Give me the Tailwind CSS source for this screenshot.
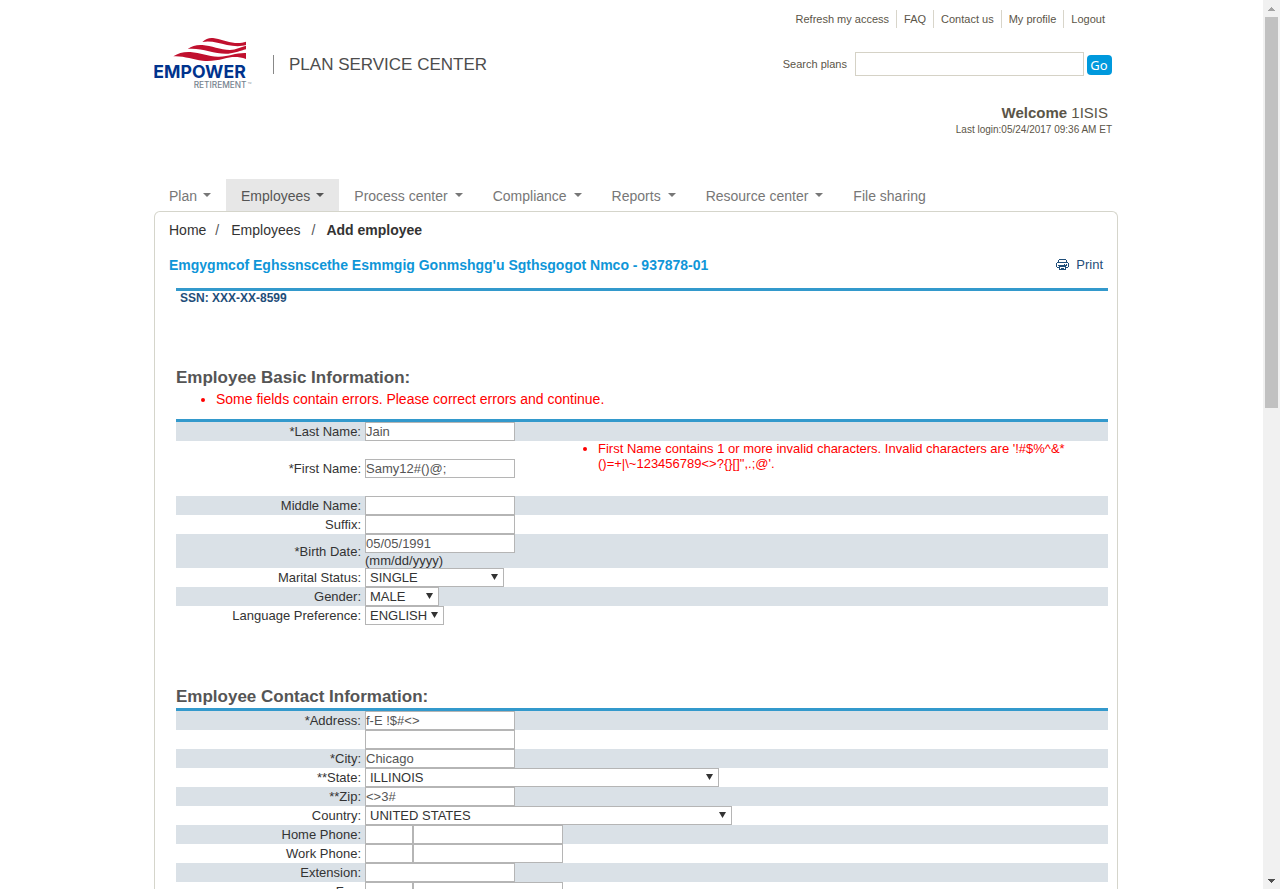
<!DOCTYPE html>
<html lang="en">
<head>
<meta charset="utf-8">
<title>Plan Service Center - Add employee</title>
<script src="https://cdn.jsdelivr.net/npm/@tailwindcss/browser@4"></script>
</head>
<body class="bg-white font-['Liberation_Sans',Arial,sans-serif] text-[13px] text-[#333]">
<div class="flex h-screen overflow-hidden">
<div class="min-w-0 flex-1 overflow-hidden">
<div class="mx-auto w-full max-w-[973px] pl-[9px]">

<header class="flex h-[179px] justify-between">
  <div class="flex items-start pt-[37px]">
    <svg class="h-[52px] w-[100px]" viewBox="42 51 300 156" role="img" aria-label="Empower Retirement">
      <g fill="#c0102e">
        <path d="M187 66C197 56 207 53 219 54C240 56 261 67 285 69C299 70 309 68 318 65V75C303 80 281 79 261 75C236 69 211 61 187 66Z"/>
        <path d="M143 87C156 77 170 74 187 75C214 77 241 90 270 90C288 89 302 81 318 77V88C301 92 287 99 265 101C225 104 184 82 143 87Z"/>
        <path d="M100 109C115 99 131 95 151 96C182 98 207 111 237 110C268 109 288 98 318 99V117C293 108 274 110 251 116C231 121 211 124 188 122C157 119 132 107 100 109Z"/>
      </g>
      <text x="40" y="174" font-family="Inter" font-weight="700" font-size="53" fill="#00338d">EMPOWER</text>
      <text x="161" y="204" font-family="Inter" font-weight="500" font-size="25" fill="#76838f">RETIREMENT</text>
      <text x="323" y="192" font-family="Inter" font-size="7" fill="#76838f">TM</text>
    </svg>
    <div class="mt-[18px] ml-[19px] h-[19px] border-l border-[#888] pl-[15px] text-[17px] leading-[19px] whitespace-nowrap text-[#4d4d4d]">PLAN SERVICE CENTER</div>
  </div>
  <div class="flex flex-col items-end pt-[10px] pr-[6px] text-[#5b5548]">
    <nav class="flex text-[11px] leading-[18px]" aria-label="Account">
      <a href="#" class="border-r border-[#d8d5ca] px-[7px]">Refresh my access</a>
      <a href="#" class="border-r border-[#d8d5ca] px-[7px]">FAQ</a>
      <a href="#" class="border-r border-[#d8d5ca] px-[7px]">Contact us</a>
      <a href="#" class="border-r border-[#d8d5ca] px-[7px]">My profile</a>
      <a href="#" class="px-[7px]">Logout</a>
    </nav>
    <form class="mt-6 flex items-center text-[11px]">
      <label for="search">Search plans</label>
      <input id="search" type="text" class="ml-2 h-6 w-[229px] border border-[#d5d2c6] px-1">
      <button type="button" class="mt-[2px] ml-[3px] h-5 w-[25px] rounded bg-[#0099dd] pr-px font-['Noto_Sans',sans-serif] text-[13px] leading-5 text-white">Go</button>
    </form>
    <div class="mt-7 pr-1 text-[15px] leading-[18px]"><b>Welcome</b> 1ISIS</div>
    <div class="text-[10px] leading-4">Last login:05/24/2017 09:36 AM ET</div>
  </div>
</header>

<nav class="flex h-8 text-[14px] leading-[34px] text-[#777]" aria-label="Main">
  <a href="#" class="flex px-[15px]">Plan<span class="mt-[14px] ml-[6px] h-0 border-x-4 border-t-4 border-x-transparent border-t-[#777]"></span></a>
  <a href="#" class="flex bg-[#e7e7e7] px-[15px] text-[#555]">Employees<span class="mt-[14px] ml-[6px] h-0 border-x-4 border-t-4 border-x-transparent border-t-[#555]"></span></a>
  <a href="#" class="flex px-[15px]">Process center<span class="mt-[14px] ml-[7px] h-0 border-x-4 border-t-4 border-x-transparent border-t-[#777]"></span></a>
  <a href="#" class="flex px-[15px]">Compliance<span class="mt-[14px] ml-[7px] h-0 border-x-4 border-t-4 border-x-transparent border-t-[#777]"></span></a>
  <a href="#" class="flex px-[15px]">Reports<span class="mt-[14px] ml-[7px] h-0 border-x-4 border-t-4 border-x-transparent border-t-[#777]"></span></a>
  <a href="#" class="flex px-[15px]">Resource center<span class="mt-[14px] ml-[7px] h-0 border-x-4 border-t-4 border-x-transparent border-t-[#777]"></span></a>
  <a href="#" class="flex px-[15px]">File sharing</a>
</nav>

<main class="rounded-t-md border border-b-0 border-[#d5d5cb]">
  <nav class="flex px-[14px] pt-2 text-[14px] leading-5 text-[#333]" aria-label="Breadcrumb">
    <a href="#">Home</a><span class="pr-3 pl-[9px] text-[#555]">/</span>
    <a href="#">Employees</a><span class="px-[11px] text-[#555]">/</span>
    <b>Add employee</b>
  </nav>
  <div class="flex items-center justify-between px-[14px] pt-[15px] leading-5">
    <h1 class="text-[14px] font-bold text-[#0f96d8]">Emgygmcof Eghssnscethe Esmmgig Gonmshgg'u Sgthsgogot Nmco - 937878-01</h1>
    <a href="#" class="flex items-center gap-[7px] text-[13px] text-[#1f4e79]">
      <svg class="mb-[2px] h-[11px] w-[13px]" viewBox="0 0 13 11" shape-rendering="crispEdges" fill="#1f4e79" aria-hidden="true">
        <path d="M3 0h7v1h-7zM2 1h1v2h-1zM10 1h1v2h-1zM1 3h11v1h-11zM0 4h1v4h-1zM12 4h1v4h-1zM8 5h1v1h-1zM10 5h1v1h-1zM1 8h2v1h-2zM10 8h2v1h-2zM3 7h7v1h-7zM3 8h1v3h-1zM9 8h1v3h-1zM4 10h5v1h-5zM5 9h3v1h-3zM2 6h9v1h-9z"/>
      </svg>
      Print</a>
  </div>

  <form class="pr-[9px] pl-[21px] leading-[15px]">
    <div class="mt-[13px] border-t-3 border-[#3399cc] pl-1 text-[12px] font-bold text-[#1f4e79]">SSN: XXX-XX-8599</div>

    <h2 class="mt-[62px] text-[17px] leading-5 font-bold text-[#555]">Employee Basic Information:</h2>
    <ul class="mt-px list-disc pl-10 text-[14px] leading-5 text-[#f00]"><li>Some fields contain errors. Please correct errors and continue.</li></ul>

    <table class="mt-[10px] w-full table-fixed border-t-3 border-[#3399cc]">
      <colgroup><col class="w-[189px]"><col class="w-[193px]"><col></colgroup>
      <tbody>
      <tr class="h-[19px] bg-[#dae1e7]"><td class="p-0 pr-1 text-right"><label for="last">*Last Name:</label></td><td colspan="2" class="p-0"><input id="last" type="text" value="Jain" class="block h-[19px] w-[150px] border border-[#b5b5b5] bg-white text-[#555]"></td></tr>
      <tr class="h-[55px]"><td class="p-0 pr-1 text-right"><label for="first">*First Name:</label></td><td class="p-0"><input id="first" type="text" value="Samy12#()@;" class="block h-[19px] w-[150px] border border-[#b5b5b5] bg-white text-[#555]"></td><td class="p-0 align-top"><ul class="list-disc pr-10 pl-10 text-[#f00]"><li>First Name contains 1 or more invalid characters. Invalid characters are '!#$%^&amp;*<br>()=+|\~123456789&lt;&gt;?{}[]",.;@'.</li></ul></td></tr>
      <tr class="h-[19px] bg-[#dae1e7]"><td class="p-0 pr-1 text-right"><label for="middle">Middle Name:</label></td><td colspan="2" class="p-0"><input id="middle" type="text" class="block h-[19px] w-[150px] border border-[#b5b5b5] bg-white text-[#555]"></td></tr>
      <tr class="h-[19px]"><td class="p-0 pr-1 text-right"><label for="suffix">Suffix:</label></td><td colspan="2" class="p-0"><input id="suffix" type="text" class="block h-[19px] w-[150px] border border-[#b5b5b5] bg-white text-[#555]"></td></tr>
      <tr class="h-[34px] bg-[#dae1e7]"><td class="p-0 pr-1 text-right"><label for="birth">*Birth Date:</label></td><td colspan="2" class="p-0"><input id="birth" type="text" value="05/05/1991" class="block h-[19px] w-[150px] border border-[#b5b5b5] bg-white text-[#555]">(mm/dd/yyyy)</td></tr>
      <tr class="h-[19px]"><td class="p-0 pr-1 text-right"><label for="marital">Marital Status:</label></td><td colspan="2" class="p-0"><div class="relative w-[139px]"><select id="marital" class="block h-[19px] w-full appearance-none border border-[#b5b5b5] bg-white pl-1"><option>SINGLE</option></select><svg class="pointer-events-none absolute top-[6px] right-[6px] h-[6px] w-[7px]" viewBox="0 0 7 6" fill="#333" aria-hidden="true"><path d="M0 0h7L3.500 6z"/></svg></div></td></tr>
      <tr class="h-[19px] bg-[#dae1e7]"><td class="p-0 pr-1 text-right"><label for="gender">Gender:</label></td><td colspan="2" class="p-0"><div class="relative w-[74px]"><select id="gender" class="block h-[19px] w-full appearance-none border border-[#b5b5b5] bg-white pl-1"><option>MALE</option></select><svg class="pointer-events-none absolute top-[6px] right-[6px] h-[6px] w-[7px]" viewBox="0 0 7 6" fill="#333" aria-hidden="true"><path d="M0 0h7L3.500 6z"/></svg></div></td></tr>
      <tr class="h-[19px]"><td class="p-0 pr-1 text-right"><label for="language">Language Preference:</label></td><td colspan="2" class="p-0"><div class="relative w-[79px]"><select id="language" class="block h-[19px] w-full appearance-none border border-[#b5b5b5] bg-white pl-1"><option>ENGLISH</option></select><svg class="pointer-events-none absolute top-[6px] right-[6px] h-[6px] w-[7px]" viewBox="0 0 7 6" fill="#333" aria-hidden="true"><path d="M0 0h7L3.500 6z"/></svg></div></td></tr>
      </tbody>
    </table>

    <h2 class="mt-[62px] text-[17px] leading-5 font-bold text-[#555]">Employee Contact Information:</h2>
    <table class="mt-px w-full table-fixed border-t-3 border-[#3399cc]">
      <colgroup><col class="w-[189px]"><col></colgroup>
      <tbody>
      <tr class="h-[19px] bg-[#dae1e7]"><td class="p-0 pr-1 text-right"><label for="address">*Address:</label></td><td class="p-0"><input id="address" type="text" value="f-E !$#&lt;&gt;" class="block h-[19px] w-[150px] border border-[#b5b5b5] bg-white text-[#555]"></td></tr>
      <tr class="h-[19px]"><td class="p-0"></td><td class="p-0"><input aria-label="Address line 2" type="text" class="block h-[19px] w-[150px] border border-[#b5b5b5] bg-white text-[#555]"></td></tr>
      <tr class="h-[19px] bg-[#dae1e7]"><td class="p-0 pr-1 text-right"><label for="city">*City:</label></td><td class="p-0"><input id="city" type="text" value="Chicago" class="block h-[19px] w-[150px] border border-[#b5b5b5] bg-white text-[#555]"></td></tr>
      <tr class="h-[19px]"><td class="p-0 pr-1 text-right"><label for="state">**State:</label></td><td class="p-0"><div class="relative w-[354px]"><select id="state" class="block h-[19px] w-full appearance-none border border-[#b5b5b5] bg-white pl-1"><option>ILLINOIS</option></select><svg class="pointer-events-none absolute top-[6px] right-[6px] h-[6px] w-[7px]" viewBox="0 0 7 6" fill="#333" aria-hidden="true"><path d="M0 0h7L3.500 6z"/></svg></div></td></tr>
      <tr class="h-[19px] bg-[#dae1e7]"><td class="p-0 pr-1 text-right"><label for="zip">**Zip:</label></td><td class="p-0"><input id="zip" type="text" value="&lt;&gt;3#" class="block h-[19px] w-[150px] border border-[#b5b5b5] bg-white text-[#555]"></td></tr>
      <tr class="h-[19px]"><td class="p-0 pr-1 text-right"><label for="country">Country:</label></td><td class="p-0"><div class="relative w-[367px]"><select id="country" class="block h-[19px] w-full appearance-none border border-[#b5b5b5] bg-white pl-1"><option>UNITED STATES</option></select><svg class="pointer-events-none absolute top-[6px] right-[6px] h-[6px] w-[7px]" viewBox="0 0 7 6" fill="#333" aria-hidden="true"><path d="M0 0h7L3.500 6z"/></svg></div></td></tr>
      <tr class="h-[19px] bg-[#dae1e7]"><td class="p-0 pr-1 text-right"><label for="home">Home Phone:</label></td><td class="p-0"><div class="flex"><input id="home" type="text" class="h-[19px] w-12 border border-[#b5b5b5] bg-white"><input aria-label="Home phone number" type="text" class="h-[19px] w-[150px] border border-[#b5b5b5] bg-white"></div></td></tr>
      <tr class="h-[19px]"><td class="p-0 pr-1 text-right"><label for="work">Work Phone:</label></td><td class="p-0"><div class="flex"><input id="work" type="text" class="h-[19px] w-12 border border-[#b5b5b5] bg-white"><input aria-label="Work phone number" type="text" class="h-[19px] w-[150px] border border-[#b5b5b5] bg-white"></div></td></tr>
      <tr class="h-[19px] bg-[#dae1e7]"><td class="p-0 pr-1 text-right"><label for="ext">Extension:</label></td><td class="p-0"><input id="ext" type="text" class="block h-[19px] w-[150px] border border-[#b5b5b5] bg-white text-[#555]"></td></tr>
      <tr class="h-[19px]"><td class="p-0 pr-1 text-right"><label for="fax">Fax:</label></td><td class="p-0"><div class="flex"><input id="fax" type="text" class="h-[19px] w-12 border border-[#b5b5b5] bg-white"><input aria-label="Fax number" type="text" class="h-[19px] w-[150px] border border-[#b5b5b5] bg-white"></div></td></tr>
      </tbody>
    </table>
  </form>
</main>
</div>
</div>

<div class="flex w-[17px] shrink-0 flex-col items-center bg-[#f1f1f1]" aria-hidden="true">
  <div class="flex h-[17px] items-center"><svg class="h-1 w-[7px]" viewBox="0 0 7 4" fill="#a3a3a3" shape-rendering="crispEdges"><path d="M3 0h1v1h1v1h1v1h1v1H0V3h1V2h1V1h1z"/></svg></div>
  <div class="flex-1"><div class="h-[391px] w-[13px] bg-[#c1c1c1]"></div></div>
  <div class="flex h-[17px] items-center"><svg class="h-1 w-[7px]" viewBox="0 0 7 4" fill="#505050" shape-rendering="crispEdges"><path d="M0 0h7v1H6v1H5v1H4v1H3V3H2V2H1V1H0z"/></svg></div>
</div>
</div>
</body>
</html>
